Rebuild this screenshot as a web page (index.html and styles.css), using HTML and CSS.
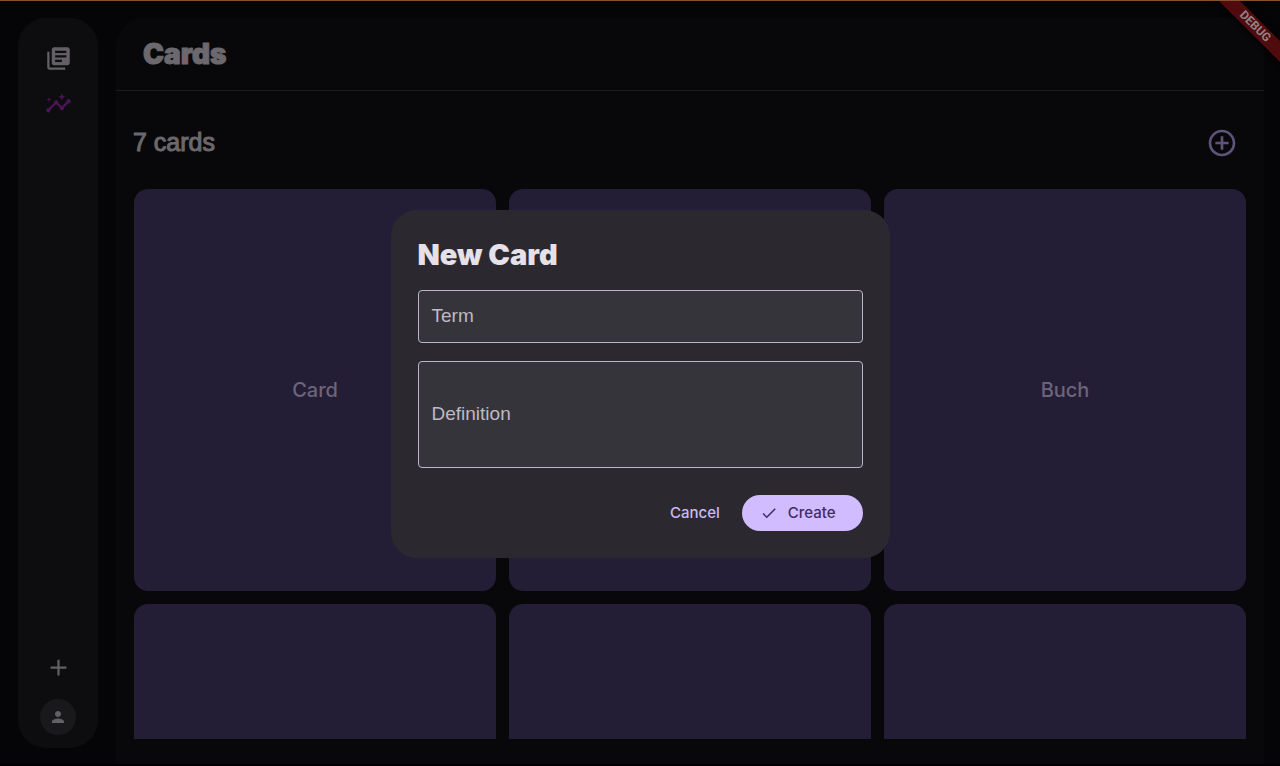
FILE: index.html
```html
<!DOCTYPE html>
<html lang="en">
<head>
<meta charset="utf-8">
<title>Cards</title>
<meta name="viewport" content="width=device-width, initial-scale=1">
<link rel="stylesheet" href="styles.css">
</head>
<body>
<div class="app">
  <nav class="rail" aria-label="Main">
    <a class="rail-item" href="#library" aria-label="Library">
      <svg class="icon" viewBox="0 0 24 24"><path d="M4 6H2v14c0 1.1.9 2 2 2h14v-2H4V6zm16-4H8c-1.1 0-2 .9-2 2v12c0 1.1.9 2 2 2h12c1.1 0 2-.9 2-2V4c0-1.1-.9-2-2-2zm-1 9H9V9h10v2zm-4 4H9v-2h6v2zm4-8H9V5h10v2z"/></svg>
    </a>
    <a class="rail-item rail-item-active" href="#insights" aria-label="Insights">
      <svg class="icon" viewBox="0 0 24 24"><path d="M21 8c-1.45 0-2.26 1.44-1.93 2.51l-3.55 3.56c-.3-.09-.74-.09-1.04 0l-2.55-2.55C12.27 10.45 11.46 9 10 9c-1.45 0-2.27 1.44-1.93 2.52l-4.56 4.55C2.44 15.74 1 16.55 1 18c0 1.1.9 2 2 2 1.45 0 2.26-1.44 1.93-2.51l4.55-4.56c.3.09.74.09 1.04 0l2.55 2.55C12.73 16.55 13.54 18 15 18c1.45 0 2.27-1.44 1.93-2.52l3.56-3.55C21.56 12.26 23 11.45 23 10c0-1.1-.9-2-2-2z"/><path d="M15 9l.94-2.07L18 6l-2.06-.93L15 3l-.92 2.07L12 6l2.08.93zM3.5 11L4 9l2-.5L4 8l-.5-2L3 8l-2 .5L3 9z"/></svg>
    </a>
    <span class="rail-space"></span>
    <button class="rail-item" type="button" aria-label="Add">
      <svg class="icon" viewBox="0 0 24 24"><path d="M19 13h-6v6h-2v-6H5v-2h6V5h2v6h6v2z"/></svg>
    </button>
    <button class="avatar" type="button" aria-label="Profile">
      <svg class="icon-small" viewBox="0 0 24 24"><path d="M12 12c2.21 0 4-1.79 4-4s-1.79-4-4-4-4 1.79-4 4 1.79 4 4 4zm0 2c-2.67 0-8 1.34-8 4v2h16v-2c0-2.66-5.33-4-8-4z"/></svg>
    </button>
  </nav>
  <main class="panel">
    <header class="panel-header"><h1 class="page-title">Cards</h1></header>
    <div class="toolbar">
      <h2 class="count">7 cards</h2>
      <button class="add" type="button" aria-label="Add card">
        <svg class="icon-large" viewBox="0 0 24 24"><path d="M13 7h-2v4H7v2h4v4h2v-4h4v-2h-4V7zm-1-5C6.48 2 2 6.48 2 12s4.48 10 10 10 10-4.48 10-10S17.52 2 12 2zm0 18c-4.41 0-8-3.59-8-8s3.59-8 8-8 8 3.59 8 8-3.59 8-8 8z"/></svg>
      </button>
    </div>
    <div class="cards">
      <article class="card">Card</article>
      <article class="card"></article>
      <article class="card">Buch</article>
      <article class="card"></article>
      <article class="card"></article>
      <article class="card"></article>
    </div>
  </main>
</div>
<div class="ribbon"><span class="ribbon-band">DEBUG</span></div>
<div class="overlay">
  <form class="dialog" role="dialog" aria-labelledby="dialog-title">
    <h2 class="dialog-title" id="dialog-title">New Card</h2>
    <div class="field">
      <input class="control" id="term" type="text">
      <label class="field-label" for="term">Term</label>
    </div>
    <div class="field">
      <textarea class="control control-tall" id="definition"></textarea>
      <label class="field-label" for="definition">Definition</label>
    </div>
    <div class="actions">
      <button class="button" type="button">Cancel</button>
      <button class="button button-filled" type="button">
        <svg class="icon-small" viewBox="0 0 24 24"><path d="M9 16.17L4.83 12l-1.42 1.41L9 19 21 7l-1.41-1.41L9 16.17z"/></svg>
        Create
      </button>
    </div>
  </form>
</div>
</body>
</html>
```
FILE: styles.css
```css
* { box-sizing: border-box; }

body {
  margin: 0;
  background: #050507;
  color: #6b696d;
  font-family: "Liberation Sans", Arial, sans-serif;
}

h1, h2 { margin: 0; }

button {
  border: 0;
  padding: 0;
  background: none;
  color: inherit;
  font: inherit;
}

svg { display: block; fill: currentColor; }
.icon { width: 27px; height: 27px; }
.icon-small { width: 18px; height: 18px; }
.icon-large { width: 32px; height: 32px; }

.app {
  display: flex;
  gap: 18px;
  height: 100vh;
  padding: 17px 16px 0 18px;
  border-top: 1px solid #85512f;
  border-bottom: 2px solid #000;
  overflow: hidden;
}

.rail {
  display: flex;
  flex-direction: column;
  align-items: center;
  width: 80px;
  margin-bottom: 16px;
  padding: 18px 0 13px;
  border-radius: 28px;
  background: #0d0d0f;
  color: #626064;
}

.rail-item {
  display: grid;
  place-items: center;
  width: 45px;
  height: 45px;
  color: inherit;
}

.rail-item-active { color: #4b1457; }
.rail-space { flex: 1; }

.avatar {
  display: grid;
  place-items: center;
  width: 36px;
  height: 36px;
  margin-top: 9px;
  border-radius: 50%;
  background: #19191b;
}

.panel {
  display: flex;
  flex-direction: column;
  flex: 1;
  min-width: 0;
  border-radius: 28px 28px 0 0;
  background: #08080a;
}

.panel-header {
  height: 73px;
  padding: 18px 27px;
  border-bottom: 1px solid #1d1c20;
}

.page-title {
  font: 900 28px/36px Inter, sans-serif;
  -webkit-text-stroke: 1px currentColor;
}

.toolbar {
  display: flex;
  align-items: center;
  justify-content: space-between;
  padding: 33px 26px 28px 17px;
}

.count {
  font-size: 25px;
  font-weight: 400;
  line-height: 37px;
  -webkit-text-stroke: 1px currentColor;
}

.add { color: #5f5379; }

.cards {
  display: grid;
  grid-template-columns: repeat(3, 1fr);
  align-content: start;
  gap: 13px;
  flex: 1;
  min-height: 0;
  margin: 0 18px 25px;
  overflow: hidden;
}

.card {
  display: grid;
  place-items: center;
  aspect-ratio: 9 / 10;
  border-radius: 14px;
  background: #231d36;
  color: #6c647a;
  font: 500 20px/24px Inter, sans-serif;
}

.ribbon {
  position: absolute;
  top: 1px;
  right: 0;
  width: 100px;
  height: 100px;
  overflow: hidden;
}

.ribbon-band {
  position: absolute;
  top: 18px;
  right: -45px;
  width: 140px;
  background: #500b0e;
  box-shadow: 0 0 6px #000;
  color: #918386;
  font: 700 12px/15px Roboto, sans-serif;
  text-align: center;
  transform: rotate(45deg);
}

.overlay {
  position: fixed;
  inset: 1px 0 0;
  display: grid;
  place-items: center;
}

.dialog {
  display: flex;
  flex-direction: column;
  gap: 18px;
  width: 499px;
  max-width: 100%;
  padding: 27px;
  border-radius: 26px;
  background: #2b292f;
}

.dialog-title {
  color: #e6e0e9;
  font: 900 29px/35px Inter, sans-serif;
}

.field { display: grid; }

.control, .field-label { grid-area: 1 / 1; }

.control {
  width: 100%;
  height: 53px;
  padding: 13px;
  border: 1px solid #bcb6c2;
  border-radius: 4px;
  background: #36343b;
  color: #e6e0e9;
  font: inherit;
  resize: none;
}

.control-tall { height: 107px; }

.field-label {
  align-self: center;
  justify-self: start;
  padding-left: 14px;
  color: #bfb9c5;
  font-size: 19px;
}

.actions {
  display: flex;
  justify-content: flex-end;
  gap: 9px;
  padding-top: 9px;
}

.button {
  display: flex;
  align-items: center;
  gap: 10px;
  height: 36px;
  padding: 0 13px;
  border-radius: 18px;
  color: #cbbaf6;
  font: 500 15px/20px Inter, sans-serif;
}

.button-filled {
  padding: 0 27px 0 18px;
  background: #d0bcff;
  color: #3d2c63;
}
```
